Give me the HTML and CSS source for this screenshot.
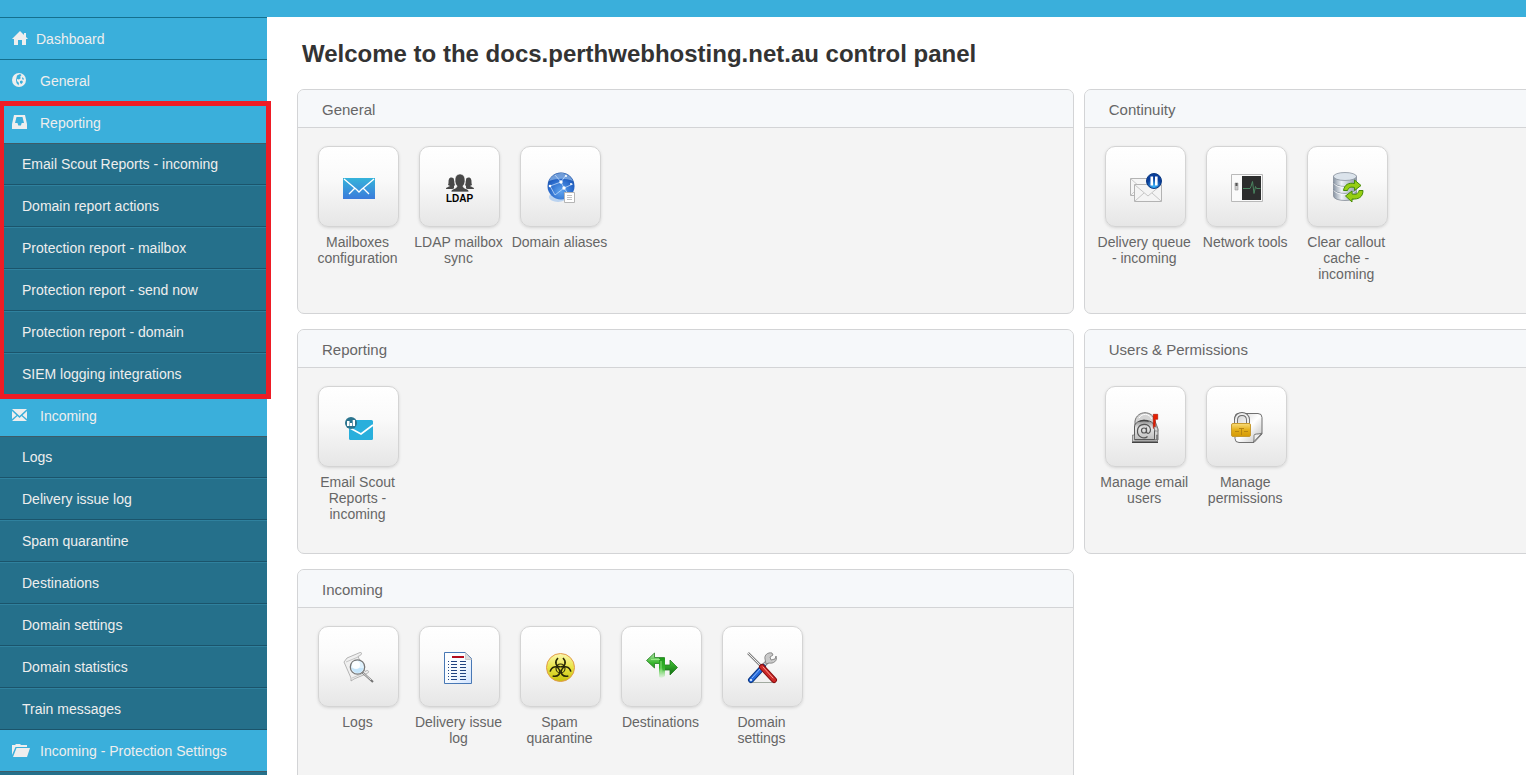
FILE: index.html
```html
<!DOCTYPE html>
<html lang="en">
<head>
<meta charset="utf-8">
<title>Control panel</title>
<link rel="stylesheet" href="styles.css">
</head>
<body>
<header class="topbar"></header>
<div class="layout">
  <nav class="sidebar" aria-label="Main">
    <a class="nav-head nav-home" href="#dashboard">
      <svg class="nav-icon" viewBox="0 0 18 16" width="18" height="16"><path d="M8 0 0 8h2v6h4V9h4v5h4V8h2l-2-2V2h-2v2z"/></svg>
      Dashboard
    </a>
    <button class="nav-head" type="button">
      <svg class="nav-icon" viewBox="0 0 18 16" width="18" height="16"><circle cx="7" cy="7" r="7"/><path class="nav-cut" d="M5 2.500 8 1l1.500 1L8 4l1 1-2 1.500L5 6v2l2 2-.5 2.500L4.500 10 4 7zM10.500 4l1.500 2-1 1-1-1.500zM8 8l2-.5 1 1.500-1.500 2L8 10z"/></svg>
      General
    </button>
    <section class="nav-group nav-marked">
      <button class="nav-head" type="button">
        <svg class="nav-icon" viewBox="0 0 18 16" width="18" height="16"><path fill-rule="evenodd" d="M2 0h11l2 9v5H0V9zM4.500 2 3 8h2.500l.8 2.500h2.600L9.700 8H12l-1.500-6z"/></svg>
        Reporting
      </button>
      <ul class="nav-list">
        <li><a href="#scout">Email Scout Reports - incoming</a></li>
        <li><a href="#actions">Domain report actions</a></li>
        <li><a href="#mailbox">Protection report - mailbox</a></li>
        <li><a href="#send">Protection report - send now</a></li>
        <li><a href="#domain">Protection report - domain</a></li>
        <li><a href="#siem">SIEM logging integrations</a></li>
      </ul>
    </section>
    <section class="nav-group">
      <button class="nav-head nav-joined" type="button">
        <svg class="nav-icon" viewBox="0 0 18 16" width="18" height="16"><path d="M0 1h15L7.500 8zM0 3l4.500 4.200L0 11zM15 3l-4.500 4.200L15 11zM0 13l5.500-5 2 2 2-2 5.500 5z"/></svg>
        Incoming
      </button>
      <ul class="nav-list">
        <li><a href="#logs">Logs</a></li>
        <li><a href="#issue">Delivery issue log</a></li>
        <li><a href="#spam">Spam quarantine</a></li>
        <li><a href="#destinations">Destinations</a></li>
        <li><a href="#settings">Domain settings</a></li>
        <li><a href="#statistics">Domain statistics</a></li>
        <li><a href="#train">Train messages</a></li>
      </ul>
    </section>
    <section class="nav-group">
      <button class="nav-head nav-joined" type="button">
        <svg class="nav-icon" viewBox="0 0 18 16" width="18" height="16"><path d="M0 12V2h3l1-1h4l1 1h6v2H3.500zM4.500 5H18l-3 9H1z"/></svg>
        Incoming - Protection Settings
      </button>
      <ul class="nav-list"></ul>
    </section>
  </nav>

  <main class="main">
    <h1 class="title">Welcome to the docs.perthwebhosting.net.au control panel</h1>
    <div class="panels">
      <section class="panel">
        <h2 class="panel-head">General</h2>
        <div class="panel-body">
          <a class="item" href="#mailboxes"><span class="tile">
            <svg viewBox="0 0 32 32" width="32" height="32"><defs><linearGradient id="mail" x2="0" y2="1"><stop stop-color="#35b3da"/><stop offset="1" stop-color="#3b7bdb"/></linearGradient></defs><path fill="url(#mail)" d="M0 6h32v21H0z"/><path fill="none" stroke="#fff" stroke-width="1.300" d="m1 7 12.500 10.500L16 20l2.500-2.500L31 7M6 22l6-6M26 22l-6-6"/></svg>
          </span>Mailboxes configuration</a>
          <a class="item" href="#ldap"><span class="tile">
            <svg viewBox="0 0 32 32" width="32" height="32"><g fill="#484848"><path d="M2 17c0-2 3-2 4-3l-2-1c1-2 0-4 1-6 1-2 5-2 5 1 1 2 0 4 1 5l-1 1v3zM30 17c0-2-3-2-4-3l2-1c-1-2 0-4-1-6-1-2-5-2-5 1-1 2 0 4-1 5l1 1v3z"/><path stroke="#fafafa" stroke-width=".7" d="M7 20c0-4 6-3 6-6-2-2-2-4-2-6 0-8 10-8 10 0 0 2 0 4-2 6 0 3 6 2 6 6z"/></g><text class="ldap" x="2" y="30">LDAP</text></svg>
          </span>LDAP mailbox sync</a>
          <a class="item" href="#aliases"><span class="tile">
            <svg viewBox="0 0 32 32" width="32" height="32"><defs><radialGradient id="globe" cx=".5" cy=".7" r=".7"><stop stop-color="#5fa4ef"/><stop offset=".65" stop-color="#2767c9"/><stop offset="1" stop-color="#164a9e"/></radialGradient></defs><ellipse cx="13" cy="25" rx="9" ry="5" fill="#bad3f0"/><circle cx="16" cy="14" r="13.500" fill="url(#globe)"/><path fill="#9cc3ef" opacity=".65" d="M4 9C8-1 23-2 28 9c-8-3-15-3-24 0z"/><g stroke="#cfe3fb" stroke-width=".7" fill="none"><path d="m5 14 11-4 5-7M16 10l3 6 9-4M19 16l-9 7M19 16l5 7M10 3l6 7M5 14l5 9"/></g><g fill="#fff"><circle cx="16" cy="10" r="1.700"/><circle cx="19" cy="16" r="1.700"/><circle cx="5" cy="14" r="1.300"/><circle cx="21" cy="4" r="1"/><circle cx="26" cy="12" r="1"/></g><path fill="#fff" stroke="#b5b5b5" d="M19.500 20.500h10v10h-10z"/><path stroke="#c2c2c2" d="M22 23.500h5M22 25.500h5M22 27.500h5"/></svg>
          </span>Domain aliases</a>
        </div>
      </section>

      <section class="panel">
        <h2 class="panel-head">Continuity</h2>
        <div class="panel-body">
          <a class="item" href="#queue"><span class="tile">
            <svg viewBox="0 0 32 32" width="32" height="32"><defs><radialGradient id="pause" cy=".85"><stop stop-color="#39b8ff"/><stop offset="1" stop-color="#0a3e9b"/></radialGradient></defs><path fill="#f5f5f5" stroke="#b3b3b3" d="M.5 6.500h25v17H.500z"/><path fill="none" stroke="#ccc" d="m1 7 9 8M1 23l6-6"/><path fill="#f4f4f4" stroke="#b3b3b3" d="M4.500 12.500h27v17h-27z"/><path fill="none" stroke="#c6c6c6" d="m5 29 9-8M31 29l-9-8M5 13l13 11L31 13"/><circle cx="24" cy="9" r="7.500" fill="url(#pause)" stroke="#0a3982"/><path fill="#fff" d="M20.500 4.500h2.600v9h-2.600zM25 4.500h2.600v9H25z"/></svg>
          </span>Delivery queue - incoming</a>
          <a class="item" href="#network"><span class="tile">
            <svg viewBox="0 0 32 32" width="32" height="32"><path fill="#fafafa" stroke="#b9b9b9" d="M.5 2.500h31v27H.500z"/><path fill="#2c2d2d" d="M11 4h19v24H11z"/><path fill="#ccc" stroke="#999" stroke-width=".6" d="M4 11h3v7H4z"/><path fill="#555" d="M4.500 11h2v3h-2z"/><path fill="none" stroke="#4a8560" d="M12 16.500h7l1-2 1.500-5 1.500 12 1.500-7 1 2h4"/></svg>
          </span>Network tools</a>
          <a class="item" href="#callout"><span class="tile">
            <svg viewBox="0 0 32 32" width="32" height="32"><defs><linearGradient id="db"><stop stop-color="#8995a4"/><stop offset=".35" stop-color="#eef2f6"/><stop offset="1" stop-color="#8c98a7"/></linearGradient></defs><path fill="url(#db)" stroke="#858d98" stroke-width=".8" d="M1.500 4v20c0 6 23 6 23 0V4z"/><path fill="none" stroke="#7f8b99" stroke-width=".9" d="M1.500 10c0 6 23 6 23 0M1.500 17c0 6 23 6 23 0"/><path fill="none" stroke="#fff" stroke-width=".8" d="M2 11.500c2 5 20 5 22 0M2 18.500c2 5 20 5 22 0"/><ellipse cx="13" cy="4.500" rx="11.500" ry="4" fill="#dbe3eb" stroke="#8a939e" stroke-width=".8"/><g fill="#96ce12" stroke="#468c09"><path d="M11.500 18.500c1-6 5-8 11-7V8l6.500 5.500-6.500 5v-3c-4-1-6 0-7 3z"/><path d="M31 18.500c0 7-5 9-11 8.500v3L13.500 24l6.500-5v3c4 1 6 0 7-3.500z"/></g></svg>
          </span>Clear callout cache - incoming</a>
        </div>
      </section>

      <section class="panel">
        <h2 class="panel-head">Reporting</h2>
        <div class="panel-body">
          <a class="item" href="#scout-reports"><span class="tile">
            <svg viewBox="0 0 32 32" width="32" height="32"><rect x="6" y="8" width="24" height="20" rx="1.500" fill="#29afdc"/><path fill="none" stroke="#fff" stroke-width="1.700" d="m7 16 11 6 12-9"/><circle cx="8" cy="11" r="6" fill="#2b748e"/><path fill="#fff" d="M4 9h2.500v5H4zM7 11h2v3H7zM9.700 8H12v6H9.700z"/></svg>
          </span>Email Scout Reports - incoming</a>
        </div>
      </section>

      <section class="panel">
        <h2 class="panel-head">Users &amp; Permissions</h2>
        <div class="panel-body">
          <a class="item" href="#users"><span class="tile">
            <svg viewBox="0 0 32 32" width="32" height="32"><defs><linearGradient id="box" x2="0" y2="1"><stop stop-color="#888"/><stop offset=".4" stop-color="#e6e6e6"/><stop offset="1" stop-color="#bcbcbc"/></linearGradient></defs><path fill="#d4d4d4" stroke="#727272" d="M5 14V9c2-11 18-11 20 0l3 8v11h-3z"/><path fill="none" stroke="#fff" d="M9 6c3-5 10-5 13 1"/><path fill="url(#box)" stroke="#5a5a5a" d="M4.500 27.500V15c0-9 20-9 20 0v12.500z"/><path fill="#444" d="M9 10c1-3 9-3 10 0-3-1-7-1-10 0zM2 29.500h26V31H2z"/><path fill="#ccc" stroke="#555" stroke-width=".6" d="M2.500 23h2v5h22v-5h1v6.500h-25z"/><circle cx="14" cy="18.500" r="2.500" fill="none" stroke="#555" stroke-width="1.200"/><path fill="none" stroke="#555" stroke-width="1.200" d="M16.500 15.500v5c2 2 4 0 4-3-1-7-12-7-13 1-.5 7 7 9 10 6"/><path fill="#e82000" stroke="#a40c00" stroke-width=".6" d="M23.300 2.300h4.400v5h-2.400v9h-2z"/><path fill="#ddd" stroke="#777" stroke-width=".6" d="M24 15h3l1 4h-3z"/></svg>
          </span>Manage email users</a>
          <a class="item" href="#permissions"><span class="tile">
            <svg viewBox="0 0 32 32" width="32" height="32"><defs><linearGradient id="page" x2="1" y2="1"><stop stop-color="#ccc"/><stop offset=".5" stop-color="#fff"/><stop offset="1" stop-color="#bbb"/></linearGradient><linearGradient id="gold" x2="0" y2="1"><stop stop-color="#f9dc7a"/><stop offset=".5" stop-color="#e3ae19"/><stop offset="1" stop-color="#d59a05"/></linearGradient></defs><path fill="url(#page)" stroke="#707070" d="M7 1.500h20q4 0 4 4V22l-8 8.500H8q-4 0-4-4V5q0-3.500 3-3.500z"/><path fill="#eee" stroke="#777" d="M22.500 30c1-2 0-7 1-7.500 2-1 5 0 7.500-1.500z"/><path fill="none" stroke="#666" stroke-width="4" d="M5 14V8c0-8 12-8 12 0v6"/><path fill="none" stroke="#ededed" stroke-width="2.200" d="M5 14V8c0-8 12-8 12 0v6"/><rect x=".5" y="11.500" width="19" height="13" rx="1.500" fill="url(#gold)" stroke="#c69a31"/><path stroke="#b68511" d="M8 16.500h5M10.500 16v7M4 19.500h4M13 19.500h4"/></svg>
          </span>Manage permissions</a>
        </div>
      </section>

      <section class="panel">
        <h2 class="panel-head">Incoming</h2>
        <div class="panel-body">
          <a class="item" href="#log"><span class="tile">
            <svg viewBox="0 0 32 32" width="32" height="32"><path fill="#f0f0f0" stroke="#a5a5a5" stroke-width=".8" d="M1 10 4 6 17 .5c2-.5 2 2 0 3l-2 1 7 15 2-1c2 0 2 2 0 3L11 27l-3 2V26z"/><path fill="none" stroke="#c6c6c6" d="m3 10 12-5M9 26l12-5"/><path stroke="#737373" stroke-width="2" d="m19 20 11 10"/><path stroke="#e4e4e4" d="m19 20 9 8"/><circle cx="14.500" cy="15" r="7.200" fill="#e0f2fd" stroke="#777" stroke-width="1.300"/><path fill="#c4e5fb" d="M9 16h11c0 6-10 7-11 0z"/><circle cx="13" cy="13" r="4" fill="#fff" opacity=".9"/></svg>
          </span>Logs</a>
          <a class="item" href="#issues"><span class="tile">
            <svg viewBox="0 0 32 32" width="32" height="32"><defs><linearGradient id="sheet" x2="1" y2="1"><stop stop-color="#fff"/><stop offset=".5" stop-color="#f7fbff"/><stop offset="1" stop-color="#cfe2ff"/></linearGradient></defs><path fill="url(#sheet)" stroke="#4878b5" d="M.5.5h21l6 6v25H.500z"/><path fill="#ddd" stroke="#bbb" stroke-width=".7" d="M21.500.5v7h6z"/><path fill="#b40d1d" d="M8 4h12v2H8z"/><path stroke="#204381" stroke-dasharray="1 2 6 3 6 20" d="M4 9.500h20M4 12.500h20M4 15.500h20M4 18.500h20M4 21.500h20M4 24.500h20M4 27.500h20"/></svg>
          </span>Delivery issue log</a>
          <a class="item" href="#quarantine"><span class="tile">
            <svg viewBox="0 0 32 32" width="32" height="32"><defs><linearGradient id="bio" x2="0" y2="1"><stop stop-color="#fbf8ae"/><stop offset=".5" stop-color="#e9e344"/><stop offset="1" stop-color="#c7c30a"/></linearGradient></defs><circle cx="15.500" cy="15.500" r="14" fill="url(#bio)" stroke="#e29a4b"/><g fill="none" stroke="#292807" stroke-width="1.600"><path d="M13 6c-4 4-2 9 2.500 9s6.500-5 2.500-9"/><path d="M13 6c-4 4-2 9 2.500 9s6.500-5 2.500-9" transform="rotate(120 15.500 16.500)"/><path d="M13 6c-4 4-2 9 2.500 9s6.500-5 2.500-9" transform="rotate(240 15.500 16.500)"/><circle cx="15.500" cy="16.500" r="4.500" stroke-width="1.100"/></g><circle cx="15.500" cy="16.500" r="1.100" fill="#e2dc37"/></svg>
          </span>Spam quarantine</a>
          <a class="item" href="#destination"><span class="tile">
            <svg viewBox="0 0 32 32" width="32" height="32"><defs><linearGradient id="stem" x2="0" y2="1"><stop stop-color="#1f9a1b"/><stop offset=".5" stop-color="#35b52b"/><stop offset="1" stop-color="#8ee77f" stop-opacity=".2"/></linearGradient><linearGradient id="head" x2="0" y2="1"><stop stop-color="#b2e6aa"/><stop offset=".45" stop-color="#39b72e"/><stop offset="1" stop-color="#126d13"/></linearGradient></defs><path fill="url(#head)" stroke="#237c20" stroke-width=".8" d="M31.500 15.500 24 8v5h-7v5h7v5zM.5 8.500 8.500 1v4.500H18.500v6H8.500V16z"/><path fill="url(#stem)" d="M13 6h6v18q-3 3-6 1z"/><path stroke="#a5f18f" stroke-width=".8" d="M5 7.500h9M15 9v12"/></svg>
          </span>Destinations</a>
          <a class="item" href="#domain-settings"><span class="tile">
            <svg viewBox="0 0 32 32" width="32" height="32"><path stroke="#a1aaa0" d="M3 30.500h24"/><path stroke="#848484" stroke-width="2.500" d="m1 1 15 15"/><path stroke="#eee" d="m1 1 15 15"/><path stroke="#888" stroke-width="4" d="m15 15 6-6"/><path stroke="#ddd" stroke-width="2" d="m15 15 6-6"/><path fill="#c9c9c9" stroke="#777" stroke-width=".8" d="M18 7c-1-4 3-7 7-6l1 2-3 2 1 3 4-1 1-3c2 5-3 8-7 7l-3 1z"/><g stroke-linecap="round"><path stroke="#0e3983" stroke-width="6" d="M16 15 4 28"/><path stroke="#276bdc" stroke-width="4" d="M16 15 4 28"/><path stroke="#8dbcff" d="m14 16-9 10"/><path stroke="#871012" stroke-width="6" d="m15 15 12 13"/><path stroke="#ce2928" stroke-width="4" d="m15 15 12 13"/><path stroke="#ff9b91" d="m16 15 10 11"/></g><circle cx="4" cy="28" r="1" fill="#fff"/></svg>
          </span>Domain settings</a>
        </div>
      </section>
    </div>
  </main>
</div>
</body>
</html>
```
FILE: styles.css
```css
* { box-sizing: border-box; }

body {
  margin: 0;
  height: 100vh;
  display: flex;
  flex-direction: column;
  overflow: hidden;
  background: #fff;
  font-family: "Liberation Sans", Arial, sans-serif;
  font-size: 14px;
}

.topbar { flex: none; height: 17px; background: #3aafdb; }

.layout { flex: 1; min-height: 0; display: flex; }

/* Sidebar */
.sidebar {
  position: relative;
  z-index: 1;
  flex: none;
  width: 267px;
  background: #25708b;
}

.nav-head {
  display: flex;
  align-items: center;
  gap: 10px;
  width: 100%;
  height: 42px;
  padding: 0 12px;
  border: 0;
  border-top: 1px solid #14708f;
  background: #3aafdb;
  color: #eee;
  font: inherit;
  text-align: left;
  text-decoration: none;
}

.nav-home { gap: 6px; }
.nav-joined { height: 41px; border-top: 0; }
.nav-icon { flex: none; fill: #eee; }
.nav-cut { fill: #3aafdb; }

.nav-list {
  margin: 0;
  padding: 0;
  border-top: 1px solid #3e5c68;
  list-style: none;
}

.nav-list a {
  display: block;
  padding: 0 22px;
  border-bottom: 1px solid #1b546b;
  color: #eee;
  line-height: 40px;
  text-decoration: none;
}

.nav-list li + li a { border-top: 1px solid #2f819e; }

.nav-marked { position: relative; }
.nav-marked::after {
  content: "";
  position: absolute;
  inset: 0 -4px -4px -1px;
  border: 5px solid #ee1c25;
  pointer-events: none;
}

/* Content */
.main {
  flex: 1;
  min-width: 0;
  overflow: hidden;
  padding: 22px 0 0 30px;
}

.title {
  margin: 0 0 20px 5px;
  color: #333;
  font-size: 24px;
  line-height: 30px;
}

.panels {
  display: grid;
  grid-template-columns: 63.2% 63.2%;
  gap: 15px 10px;
}

.panel {
  overflow: hidden;
  border: 1px solid #d3d4d6;
  border-radius: 7px;
  background: #f4f4f4;
}

.panel-head {
  margin: 0;
  padding: 2px 24px 0;
  border-bottom: 1px solid #d3d4d6;
  background: #f6f8fa;
  color: #666;
  font-size: 15px;
  font-weight: 400;
  line-height: 35px;
}

.panel-body {
  display: flex;
  align-items: flex-start;
  gap: 2px;
  min-height: 185px;
  padding: 18px 10px;
}

.item {
  display: flex;
  flex-direction: column;
  align-items: center;
  gap: 7px;
  width: 99px;
  color: #666;
  line-height: 16px;
  text-align: center;
  text-decoration: none;
}

.tile {
  align-self: flex-start;
  width: 81px;
  height: 81px;
  margin-left: 10px;
  padding: 25px 0 0 24px;
  border: 1px solid #d4d4d4;
  border-radius: 10px;
  background: linear-gradient(#fff, #fafafa 40%, #e6e6e6);
  box-shadow: 0 1px 3px #d4d4d4;
  text-align: left;
}

.tile svg { display: block; }

.ldap { font: bold 10px "Liberation Sans", Arial, sans-serif; }
```
